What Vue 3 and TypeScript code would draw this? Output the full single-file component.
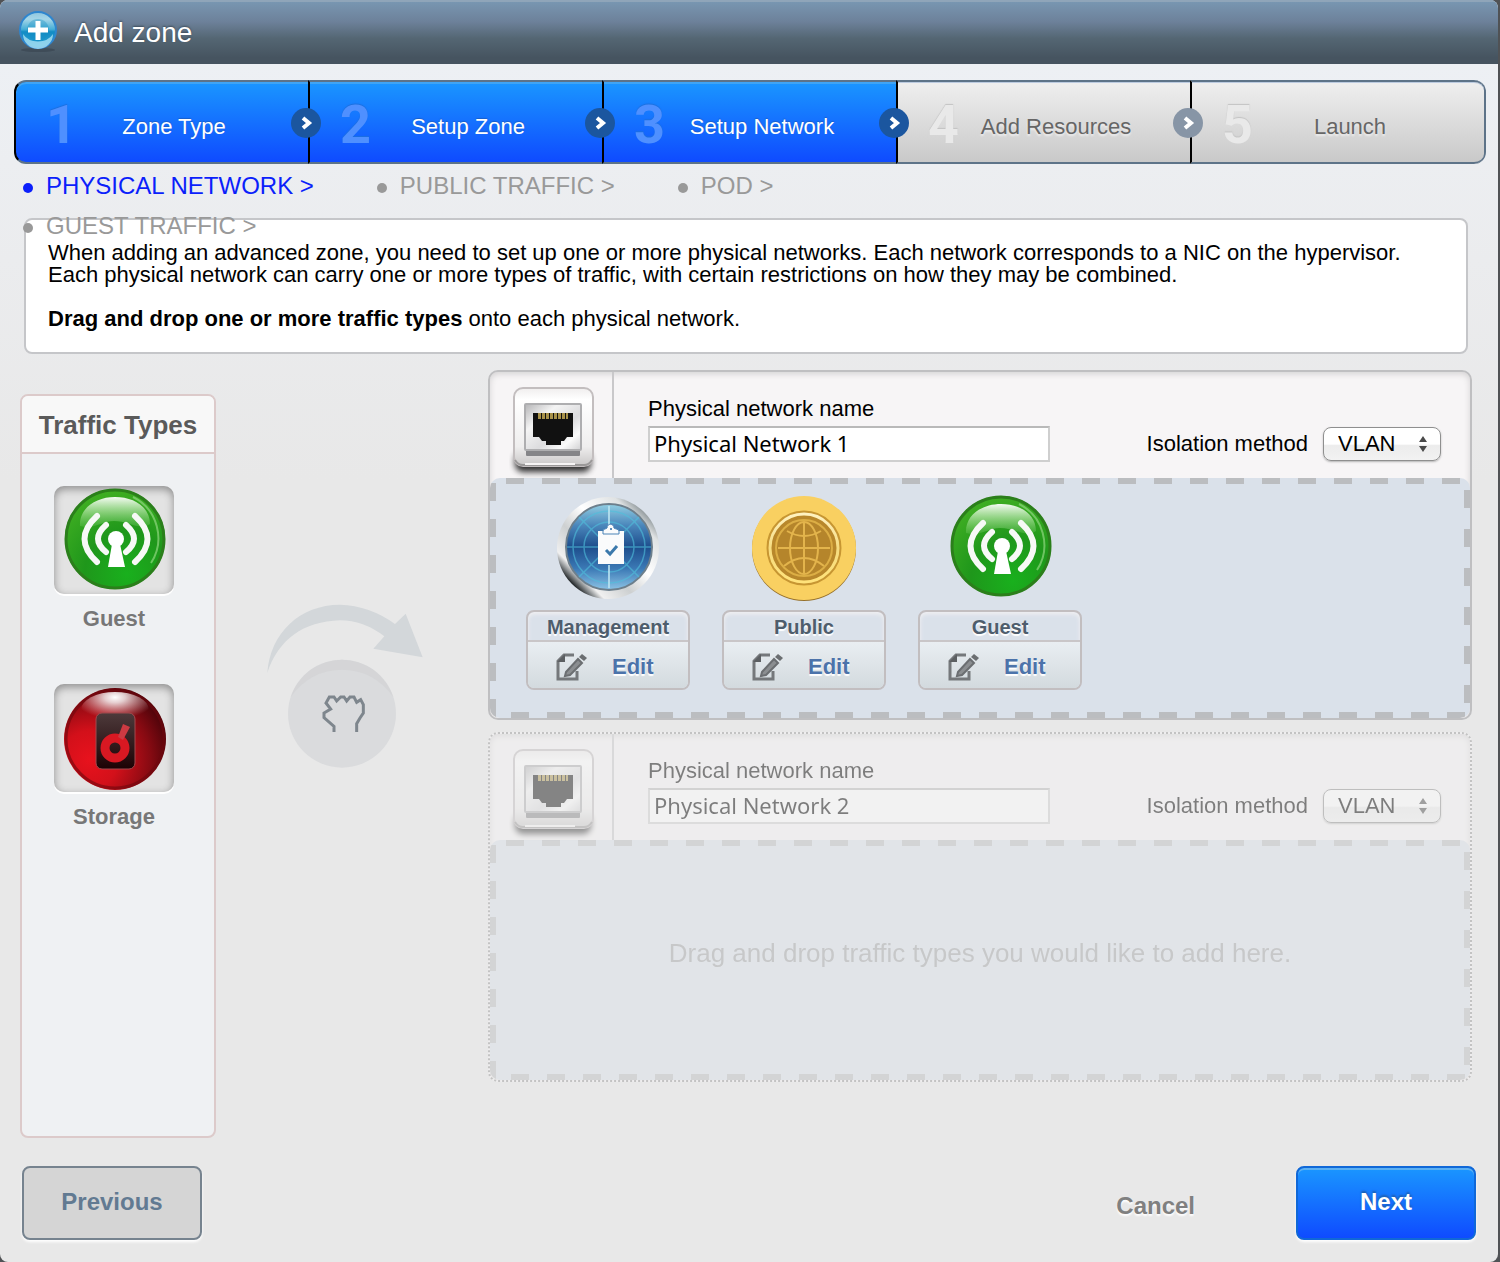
<script setup lang="ts">
import { reactive } from 'vue'

interface Step {
  label: string
  done: boolean
}

interface Network {
  id: string
  name: string
  isolation: string
  active: boolean
  traffic: { icon: string; label: string }[]
}

const steps: Step[] = [
  { label: 'Zone Type', done: true },
  { label: 'Setup Zone', done: true },
  { label: 'Setup Network', done: true },
  { label: 'Add Resources', done: false },
  { label: 'Launch', done: false },
]

const substeps = ['Physical Network', 'Public Traffic', 'Pod', 'Guest Traffic']

const available = [
  { icon: 'guest', label: 'Guest' },
  { icon: 'storage', label: 'Storage' },
]

const networks = reactive<Network[]>([
  {
    id: 'net-1',
    name: 'Physical Network 1',
    isolation: 'VLAN',
    active: true,
    traffic: [
      { icon: 'management', label: 'Management' },
      { icon: 'public', label: 'Public' },
      { icon: 'guest', label: 'Guest' },
    ],
  },
  { id: 'net-2', name: 'Physical Network 2', isolation: 'VLAN', active: false, traffic: [] },
])
</script>

<template>
  <div class="dialog">
    <svg class="sprite" width="0" height="0" aria-hidden="true">
      <defs>
        <radialGradient id="g-guest" cx="0.62" cy="0.85" r="0.85">
          <stop offset="0" stop-color="#19b01d" />
          <stop offset="0.5" stop-color="#1f971b" />
          <stop offset="1" stop-color="#3fae22" />
        </radialGradient>
        <linearGradient id="g-gloss" x1="0" y1="0" x2="0" y2="1">
          <stop offset="0" stop-color="#fff" stop-opacity="0.95" />
          <stop offset="0.5" stop-color="#c4edb8" stop-opacity="0.6" />
          <stop offset="1" stop-color="#8fdc7e" stop-opacity="0.2" />
        </linearGradient>
        <radialGradient id="g-storage" cx="0.25" cy="0.7" r="0.8">
          <stop offset="0" stop-color="#e8121d" />
          <stop offset="0.35" stop-color="#d3101a" />
          <stop offset="0.75" stop-color="#860a12" />
          <stop offset="1" stop-color="#4e040a" />
        </radialGradient>
        <radialGradient id="g-shine" cx="0.5" cy="0.15" r="0.6">
          <stop offset="0" stop-color="#fff" />
          <stop offset="0.25" stop-color="#fff" stop-opacity="0.8" />
          <stop offset="1" stop-color="#ffd0d0" stop-opacity="0" />
        </radialGradient>
        <linearGradient id="g-drive" x1="0" y1="0" x2="0" y2="1">
          <stop offset="0" stop-color="#4d3a3b" />
          <stop offset="1" stop-color="#1c0204" />
        </linearGradient>
        <linearGradient id="g-silver" x1="0.15" y1="0.85" x2="0.85" y2="0.15">
          <stop offset="0" stop-color="#24282a" />
          <stop offset="0.06" stop-color="#8c9092" />
          <stop offset="0.12" stop-color="#f0f0f0" />
          <stop offset="0.35" stop-color="#cdd0d1" />
          <stop offset="0.6" stop-color="#fff" />
          <stop offset="0.9" stop-color="#dfe2e3" />
          <stop offset="1" stop-color="#98a0a3" />
        </linearGradient>
        <linearGradient id="g-radar" x1="0" y1="0" x2="0" y2="1">
          <stop offset="0" stop-color="#92cfe3" />
          <stop offset="0.25" stop-color="#4a86bb" />
          <stop offset="0.5" stop-color="#1d4d8c" />
          <stop offset="0.75" stop-color="#3b79b5" />
          <stop offset="1" stop-color="#8cc4e6" />
        </linearGradient>
        <linearGradient id="g-coin" x1="0" y1="0" x2="0" y2="1">
          <stop offset="0" stop-color="#fff2c0" />
          <stop offset="0.5" stop-color="#f6dc80" />
          <stop offset="1" stop-color="#ffe27a" />
        </linearGradient>
        <linearGradient id="g-plate" x1="0" y1="0" x2="0" y2="1">
          <stop offset="0" stop-color="#f0eeee" />
          <stop offset="0.15" stop-color="#fff" />
          <stop offset="0.75" stop-color="#efeeee" />
          <stop offset="1" stop-color="#c9c7c7" />
        </linearGradient>
        <linearGradient id="g-bezel" x1="0" y1="0" x2="1" y2="1">
          <stop offset="0" stop-color="#b4b4b6" />
          <stop offset="0.3" stop-color="#f4f4f4" />
          <stop offset="0.6" stop-color="#dcdcde" />
          <stop offset="0.8" stop-color="#fbfbfb" />
          <stop offset="1" stop-color="#cfcfd1" />
        </linearGradient>
        <linearGradient id="g-plus" x1="0" y1="0" x2="0" y2="1">
          <stop offset="0" stop-color="#8fc6de" />
          <stop offset="0.2" stop-color="#a5d6e8" />
          <stop offset="0.48" stop-color="#45aed6" />
          <stop offset="0.55" stop-color="#128cc4" />
          <stop offset="1" stop-color="#2aa3d6" />
        </linearGradient>
        <filter id="f-soft" x="-20%" y="-60%" width="140%" height="220%">
          <feGaussianBlur stdDeviation="3" />
        </filter>
      </defs>

      <symbol id="icon-guest" viewBox="0 0 106 106">
        <circle cx="54" cy="51" r="50" fill="url(#g-guest)" />
        <circle cx="54" cy="51" r="49" fill="none" stroke="#2b7f1b" stroke-width="3" />
        <path d="M72 9a46 46 0 0 1 18 66" fill="none" stroke="#8fd67f" stroke-width="2" opacity="0.7" />
        <path d="M19 38C18 20 35 9 54 9s35 10 35 27c-10 7-22-3-36-3-12 0-20 9-34 5z" fill="url(#g-gloss)" />
        <g fill="none" stroke="#f7f9f6" stroke-width="6" stroke-linecap="round">
          <path d="M45 37Q29 51 45 64" />
          <path d="M65 37Q81 51 65 64" />
          <path d="M36 28Q11 51 36 74" />
          <path d="M74 28Q99 51 74 74" />
        </g>
        <circle cx="55" cy="51" r="8" fill="#fff" />
        <path d="M51 56h8l5 23H47z" fill="#fff" />
      </symbol>

      <symbol id="icon-storage" viewBox="0 0 106 106">
        <circle cx="54" cy="53" r="51" fill="url(#g-storage)" />
        <circle cx="54" cy="53" r="49" fill="none" stroke="#6e070d" stroke-width="3" opacity="0.6" />
        <ellipse cx="54" cy="24" rx="34" ry="18" fill="url(#g-shine)" />
        <rect x="35" y="27" width="39" height="56" rx="6" fill="url(#g-drive)" stroke="#a04a4e" stroke-width="1" />
        <circle cx="54" cy="62" r="10" fill="none" stroke="#d81822" stroke-width="9" />
        <path d="M62 38l7 3-7 13-5-3z" fill="#cc3a42" />
      </symbol>

      <symbol id="icon-management" viewBox="0 0 106 106">
        <circle cx="53" cy="53" r="51" fill="url(#g-silver)" />
        <circle cx="54" cy="52" r="43" fill="url(#g-radar)" stroke="#6d7f8c" stroke-width="2" />
        <g fill="none" stroke="#4fc0dc" stroke-width="1.5" opacity="0.6">
          <circle cx="54" cy="52" r="25" />
          <circle cx="54" cy="52" r="36" />
          <path d="M12 52h84M24 22l60 60M84 22L24 82" />
        </g>
        <path d="M54 11v22M54 70v23" stroke="#bde6f2" stroke-width="2" opacity="0.8" />
        <path d="M43 36h26v33H43z" fill="#fafbfc" />
        <path d="M48 36v3h16v-3c0-2-4-2-5-3 0-5-7-5-7 0-1 1-4 1-4 3z" fill="#fafbfc" stroke="#4a83b6" stroke-width="1" />
        <circle cx="56" cy="34" r="1" fill="#2e6ba4" />
        <path d="M51 55l4 4 7-8" fill="none" stroke="#3b79ac" stroke-width="3" />
      </symbol>

      <symbol id="icon-public" viewBox="0 0 106 106">
        <circle cx="53" cy="54" r="52" fill="#96702a" />
        <circle cx="53" cy="53" r="52" fill="#f9d061" />
        <circle cx="53" cy="53" r="36" fill="#b8872b" stroke="#c79632" stroke-width="3" />
        <circle cx="53" cy="53" r="34" fill="none" stroke="url(#g-coin)" stroke-width="3" />
        <circle cx="53" cy="53" r="28" fill="#b5852b" stroke="#dcae45" stroke-width="2" />
        <g fill="none" stroke="#e3b44c" stroke-width="2">
          <path d="M27 53h52M53 27v52" />
          <ellipse cx="53" cy="53" rx="14" ry="26" />
          <path d="M36 36q17 10 34 0M33 71q20-16 40 0" />
        </g>
      </symbol>

      <symbol id="icon-port" viewBox="0 0 90 96">
        <rect x="6" y="68" width="76" height="20" rx="8" fill="#000" opacity="0.8" filter="url(#f-soft)" />
        <rect x="5" y="4" width="79" height="78" rx="9" fill="url(#g-plate)" stroke="#c3bebf" stroke-width="2" />
        <path d="M6 76q3 5 8 5h61q5 0 8-5" fill="none" stroke="#9b9999" stroke-width="2" />
        <path d="M16 80h50" stroke="#f6f4f4" stroke-width="2" />
        <rect x="17" y="66" width="54" height="6" rx="1" fill="#858588" />
        <rect x="16" y="20" width="56" height="46" rx="1" fill="url(#g-bezel)" stroke="#aeaeb0" stroke-width="2" />
        <path d="M24 29h40v24h-6l-3 4h-3v4H37v-4h-4l-3-4h-6z" fill="#111" />
        <path d="M29 32h30" stroke="#a8924a" stroke-width="6" stroke-dasharray="3 1" />
      </symbol>

      <symbol id="icon-edit" viewBox="0 0 32 30">
        <path d="M19 3H9L3 9v18h19v-8" fill="none" stroke="#75787b" stroke-width="3" />
        <path d="M2 10l8-8v8z" fill="#5c5f62" />
        <path d="M11 20L23 7l4 4-12 12-5 1z" fill="#8b8e91" stroke="#6b6e71" stroke-width="2" />
        <path d="M24 5l3-3 5 4-3 3z" fill="#6b6e71" />
      </symbol>
    </svg>

    <header class="title-bar">
      <svg class="title-icon" width="40" height="42" viewBox="0 0 40 42" aria-hidden="true">
        <ellipse cx="20" cy="39" rx="17" ry="2" fill="#3f4c58" />
        <circle cx="20" cy="19" r="18" fill="url(#g-plus)" stroke="#2e86cf" stroke-width="2" />
        <path d="M5 22a15 15 0 0 0 30 0a17 14 0 0 1-30 0z" fill="#a9e0f2" opacity="0.8" transform="translate(0 1)" />
        <circle cx="20" cy="19" r="11" fill="#128cc4" opacity="0.35" />
        <path d="M20 10v19M10 19h20" stroke="#fff" stroke-width="5" />
      </svg>
      <h1>Add zone</h1>
    </header>

    <ol class="steps">
      <li v-for="(step, i) in steps" :key="step.label" :class="['step', { done: step.done }]">
        <span class="step-number">{{ i + 1 }}</span>
        <span class="step-label">{{ step.label }}</span>
        <svg v-if="i < steps.length - 1" class="step-arrow" width="30" height="30" viewBox="0 0 30 30" aria-hidden="true">
          <circle cx="15" cy="15" r="15" class="step-arrow-disc" />
          <path d="M12 10l6 5-6 5" fill="none" stroke="#fff" stroke-width="4" />
        </svg>
      </li>
    </ol>

    <ul class="substeps">
      <li v-for="(name, i) in substeps" :key="name" :class="{ current: i === 0 }">{{ name }} &gt;</li>
    </ul>

    <section class="info">
      <p>
        When adding an advanced zone, you need to set up one or more physical networks. Each network corresponds to a NIC
        on the hypervisor.<br />
        Each physical network can carry one or more types of traffic, with certain restrictions on how they may be
        combined.
      </p>
      <p><strong>Drag and drop one or more traffic types</strong> onto each physical network.</p>
    </section>

    <main class="workspace">
      <aside class="types">
        <h2>Traffic Types</h2>
        <ul>
          <li v-for="t in available" :key="t.icon">
            <div class="slot">
              <svg width="106" height="106" aria-hidden="true"><use :href="`#icon-${t.icon}`" /></svg>
            </div>
            <span>{{ t.label }}</span>
          </li>
        </ul>
      </aside>

      <div class="hint">
        <svg width="158" height="168" viewBox="78 40 474 504" aria-hidden="true">
          <path
            d="M82 250C90 130 180 45 300 45Q390 48 465 103L497 72L548 203L400 177L433 140Q370 92 300 92C190 95 115 150 82 250z"
            fill="#d3d7da"
          />
          <circle cx="306" cy="372" r="162" fill="#dadbdd" />
          <path d="M152 322a162 162 0 0 1 308 0Q400 240 306 240T152 322z" fill="#cfd0d2" opacity="0.5" />
          <path
            d="M282 427V410L252 384V370L272 358L258 340L268 322H282L290 334L302 322H312L320 334L330 322H342L350 338L362 330L370 345V370L360 385L350 402V427"
            fill="none"
            stroke="#7e868d"
            stroke-width="9"
          />
        </svg>
      </div>

      <div class="networks">
        <section v-for="net in networks" :key="net.id" :class="['network', { inactive: !net.active }]">
          <div class="network-head">
            <div class="network-icon">
              <svg width="90" height="96" aria-hidden="true"><use href="#icon-port" /></svg>
            </div>
            <div class="network-name">
              <label :for="`${net.id}-name`">Physical network name</label>
              <input :id="`${net.id}-name`" v-model="net.name" type="text" />
            </div>
            <div class="isolation">
              <label :for="`${net.id}-iso`">Isolation method</label>
              <div class="select">
                <select :id="`${net.id}-iso`" v-model="net.isolation">
                  <option>VLAN</option>
                </select>
                <svg width="10" height="16" viewBox="0 0 10 16" aria-hidden="true">
                  <path d="M5 0l4 6H1zM5 16l4-6H1z" fill="#4a4a4a" />
                </svg>
              </div>
            </div>
          </div>
          <div class="drop">
            <ul v-if="net.traffic.length" class="tags">
              <li v-for="t in net.traffic" :key="t.icon">
                <svg width="106" height="106" aria-hidden="true"><use :href="`#icon-${t.icon}`" /></svg>
                <div class="tag">
                  <span class="tag-name">{{ t.label }}</span>
                  <button type="button" class="tag-edit">
                    <svg width="32" height="30" aria-hidden="true"><use href="#icon-edit" /></svg>
                    <span>Edit</span>
                  </button>
                </div>
              </li>
            </ul>
            <p v-else class="empty">Drag and drop traffic types you would like to add here.</p>
          </div>
        </section>
      </div>
    </main>

    <footer class="actions">
      <button type="button" class="previous">Previous</button>
      <button type="button" class="cancel">Cancel</button>
      <button type="button" class="next">Next</button>
    </footer>
  </div>
</template>

<style>
body {
  margin: 0;
  background: #505255;
}
</style>

<style scoped>
* {
  box-sizing: border-box;
}

.dialog {
  display: flex;
  flex-direction: column;
  min-height: 100vh;
  margin-right: 2px;
  overflow: hidden;
  border-radius: 8px;
  background: linear-gradient(#edf0f4 64px, #ebecee 260px, #e8e8e8 480px);
  color: #000;
  font: 22px/22px 'Liberation Sans', Arial, Helvetica, sans-serif;
}

h1,
h2,
p,
ul,
ol {
  margin: 0;
  padding: 0;
  list-style: none;
}

button,
input,
select {
  margin: 0;
  font: inherit;
}

button {
  cursor: pointer;
}

.sprite {
  position: absolute;
}

.title-bar {
  display: flex;
  align-items: center;
  gap: 16px;
  height: 64px;
  padding-left: 18px;
  background: linear-gradient(#7998b3, #6d819a 34%, #546673 60%, #465460 90%);
  box-shadow: inset 0 2px #8fa5b9;
}

.title-icon {
  flex: none;
}

h1 {
  padding-top: 2px;
  color: #fff;
  font-size: 28px;
  font-weight: 400;
  line-height: 32px;
  text-shadow: 0 -1px 2px #3c4c5c;
}

.steps {
  display: flex;
  margin: 16px 12px 0 14px;
  border-right: 2px solid #5d7388;
  border-radius: 12px;
}

.step {
  position: relative;
  display: flex;
  flex: 1;
  align-items: center;
  height: 84px;
  border: 2px solid #5d7388;
  border-right: 0;
  border-left-color: #000;
  background: linear-gradient(#efefef, #c9c9c9);
  box-shadow: inset 0 1px #bccbe0;
  color: #666;
}

.step:first-child {
  border-radius: 12px 0 0 12px;
}

.step:last-child {
  border-radius: 0 10px 10px 0;
}

.step.done {
  background: linear-gradient(#1a96ff, #0f4bff);
  box-shadow: inset 0 2px #3fa4f4;
  color: #fff;
}

.step-number {
  width: 58px;
  padding: 6px 0 0 30px;
  color: #e9e9e9;
  font: 700 54px/64px Roboto, 'Liberation Sans', sans-serif;
  text-shadow: 0 -1px 1px #c2c2c2;
}

.done .step-number {
  color: #4f90ff;
  text-shadow: 0 -1px 1px #1c6fdf;
}

.step-label {
  flex: 1;
  padding: 10px 34px 0 0;
  text-align: center;
  text-shadow: 0 2px 2px #efefef;
  white-space: nowrap;
}

.done .step-label {
  text-shadow: 0 -1px 1px #1b5fc8;
}

.step-arrow {
  position: absolute;
  top: 26px;
  right: -13px;
  z-index: 1;
}

.step-arrow-disc {
  fill: #8795a6;
}

.done .step-arrow-disc {
  fill: #1b569f;
}

.substeps {
  position: relative;
  display: flex;
  flex-wrap: wrap;
  column-gap: 63px;
  width: 68%;
  margin: 2px 0 -28px 23px;
  color: #999;
  font-size: 24px;
  line-height: 40px;
  text-transform: uppercase;
}

.substeps li {
  display: flex;
  align-items: center;
  gap: 13px;
}

.substeps li::before {
  width: 10px;
  height: 10px;
  margin-top: 4px;
  border-radius: 50%;
  background: currentColor;
  content: '';
}

.substeps .current {
  color: #0b1ffb;
}

.info {
  display: flex;
  flex-direction: column;
  gap: 22px;
  min-height: 136px;
  margin: 0 30px 0 24px;
  padding: 22px 22px 0;
  border: 2px solid #c5c6c9;
  border-radius: 8px;
  background: #fff;
}

.workspace {
  display: flex;
  margin: 16px 26px 0 20px;
}

.types {
  flex: none;
  width: 196px;
  min-height: 744px;
  margin-top: 24px;
  border: 2px solid #dccaca;
  border-radius: 8px;
  background: #eff1f3;
}

h2 {
  height: 58px;
  border-bottom: 2px solid #dccaca;
  border-radius: 6px 6px 0 0;
  background: #f8f8f8;
  color: #5a5a5a;
  font-size: 26px;
  line-height: 58px;
  text-align: center;
}

.types ul {
  display: flex;
  flex-direction: column;
  gap: 54px;
  padding: 32px 40px 0 32px;
}

.types li {
  display: flex;
  flex-direction: column;
  gap: 14px;
  color: #777;
  font-weight: 700;
  text-align: center;
}

.slot {
  display: flex;
  justify-content: center;
  height: 108px;
  padding-top: 2px;
  border-radius: 10px;
  background: #e3e3e3;
  box-shadow: inset 0 3px 8px #8d8d8d, 0 2px #fff;
}

.hint {
  flex: none;
  width: 272px;
  padding: 233px 0 0 50px;
}

.networks {
  display: flex;
  flex: 1;
  flex-direction: column;
  gap: 12px;
}

.network {
  border: 2px solid #bfbfc1;
  border-radius: 10px;
  background: #f7f5f6;
  box-shadow: inset 0 2px 6px #d4d2d3;
}

.network.inactive {
  border-style: dotted;
  border-color: #999;
  opacity: 0.46;
}

.network-head {
  display: flex;
  height: 106px;
}

.network-icon {
  width: 124px;
  padding: 12px 0 0 19px;
  border-right: 2px solid #c9c8ca;
}

.network-name {
  display: flex;
  flex-direction: column;
  gap: 6px;
  width: 436px;
  padding: 26px 0 0 34px;
}

input {
  height: 36px;
  padding: 0 4px 2px;
  border: 2px solid #cfcfcf;
  border-top-color: #b9b9b9;
  background: #fff;
  color: #000;
  font: 22px/30px 'Noto Sans', 'Open Sans', sans-serif;
}

.isolation {
  display: flex;
  flex: 1;
  align-items: center;
  justify-content: flex-end;
  gap: 15px;
  padding: 38px 29px 0 0;
}

.select {
  position: relative;
}

select {
  display: block;
  width: 118px;
  height: 34px;
  padding: 0 14px;
  border: 1px solid #8f8f8f;
  border-radius: 8px;
  appearance: none;
  background: linear-gradient(#fff 50%, #ececec 55%, #f2f2f2);
  box-shadow: 0 1px 2px #b5b5b5;
  color: #000;
}

.select svg {
  position: absolute;
  top: 9px;
  right: 13px;
  pointer-events: none;
}

.drop {
  display: flex;
  height: 240px;
  border-radius: 10px;
  background:
    repeating-linear-gradient(90deg, #bbbdc0 0 18px, transparent 18px 36px) 16px 0 / calc(100% - 22px) 6px no-repeat,
    repeating-linear-gradient(90deg, #bbbdc0 0 18px, transparent 18px 36px) 21px 100% / calc(100% - 22px) 6px no-repeat,
    repeating-linear-gradient(#bbbdc0 0 18px, transparent 18px 36px) 0 5px / 6px 100% no-repeat,
    repeating-linear-gradient(#bbbdc0 0 18px, transparent 18px 39px) 100% 12px / 6px 100% no-repeat,
    #dae1ea;
}

.tags {
  display: flex;
  gap: 32px;
  padding: 17px 0 0 36px;
}

.tags li {
  display: flex;
  flex-direction: column;
  align-items: center;
  gap: 9px;
  width: 164px;
}

.tag {
  display: flex;
  flex-direction: column;
  width: 100%;
  height: 80px;
  border: 2px solid #c2bec0;
  border-radius: 8px;
  box-shadow: inset 0 2px 4px #f2f0f2;
}

.tag-name {
  padding-top: 2px;
  color: #4e5d6c;
  font-size: 20px;
  font-weight: 700;
  line-height: 26px;
  text-align: center;
  text-shadow: 0 2px 1px #fff;
}

.tag-edit {
  display: flex;
  flex: 1;
  align-items: center;
  gap: 25px;
  padding: 4px 0 0 27px;
  border: 0;
  border-top: 2px solid #c9c6c8;
  border-radius: 0 0 6px 6px;
  background: linear-gradient(#e9eef2, #d3dade);
  color: #4c73aa;
  font-weight: 700;
  text-shadow: 0 2px 1px #fff;
}

.empty {
  margin: auto;
  padding-bottom: 14px;
  color: #a2a4a6;
  font-size: 26px;
  line-height: 30px;
}

.actions {
  display: flex;
  align-items: center;
  margin: 28px 22px 22px;
}

.actions button {
  height: 74px;
  border-radius: 8px;
  font-size: 24px;
  font-weight: 700;
}

.previous,
.next {
  width: 180px;
  padding-bottom: 4px;
}

.previous {
  margin-right: auto;
  border: 2px solid #76838f;
  background: #d5d5d5;
  box-shadow: 0 2px 3px #fff;
  color: #627a92;
}

.actions .cancel {
  margin-right: 101px;
  padding: 6px 0 0;
  border: 0;
  background: none;
  color: #808080;
  text-shadow: 0 2px 2px #fff;
}

.next {
  border: 2px solid #1068d8;
  background: linear-gradient(#1a96ff, #0f4bff);
  box-shadow: inset 0 2px #5cb0f2, 0 2px 3px #fff;
  color: #fff;
  text-shadow: 0 -2px 2px #1f5fae;
}
</style>
